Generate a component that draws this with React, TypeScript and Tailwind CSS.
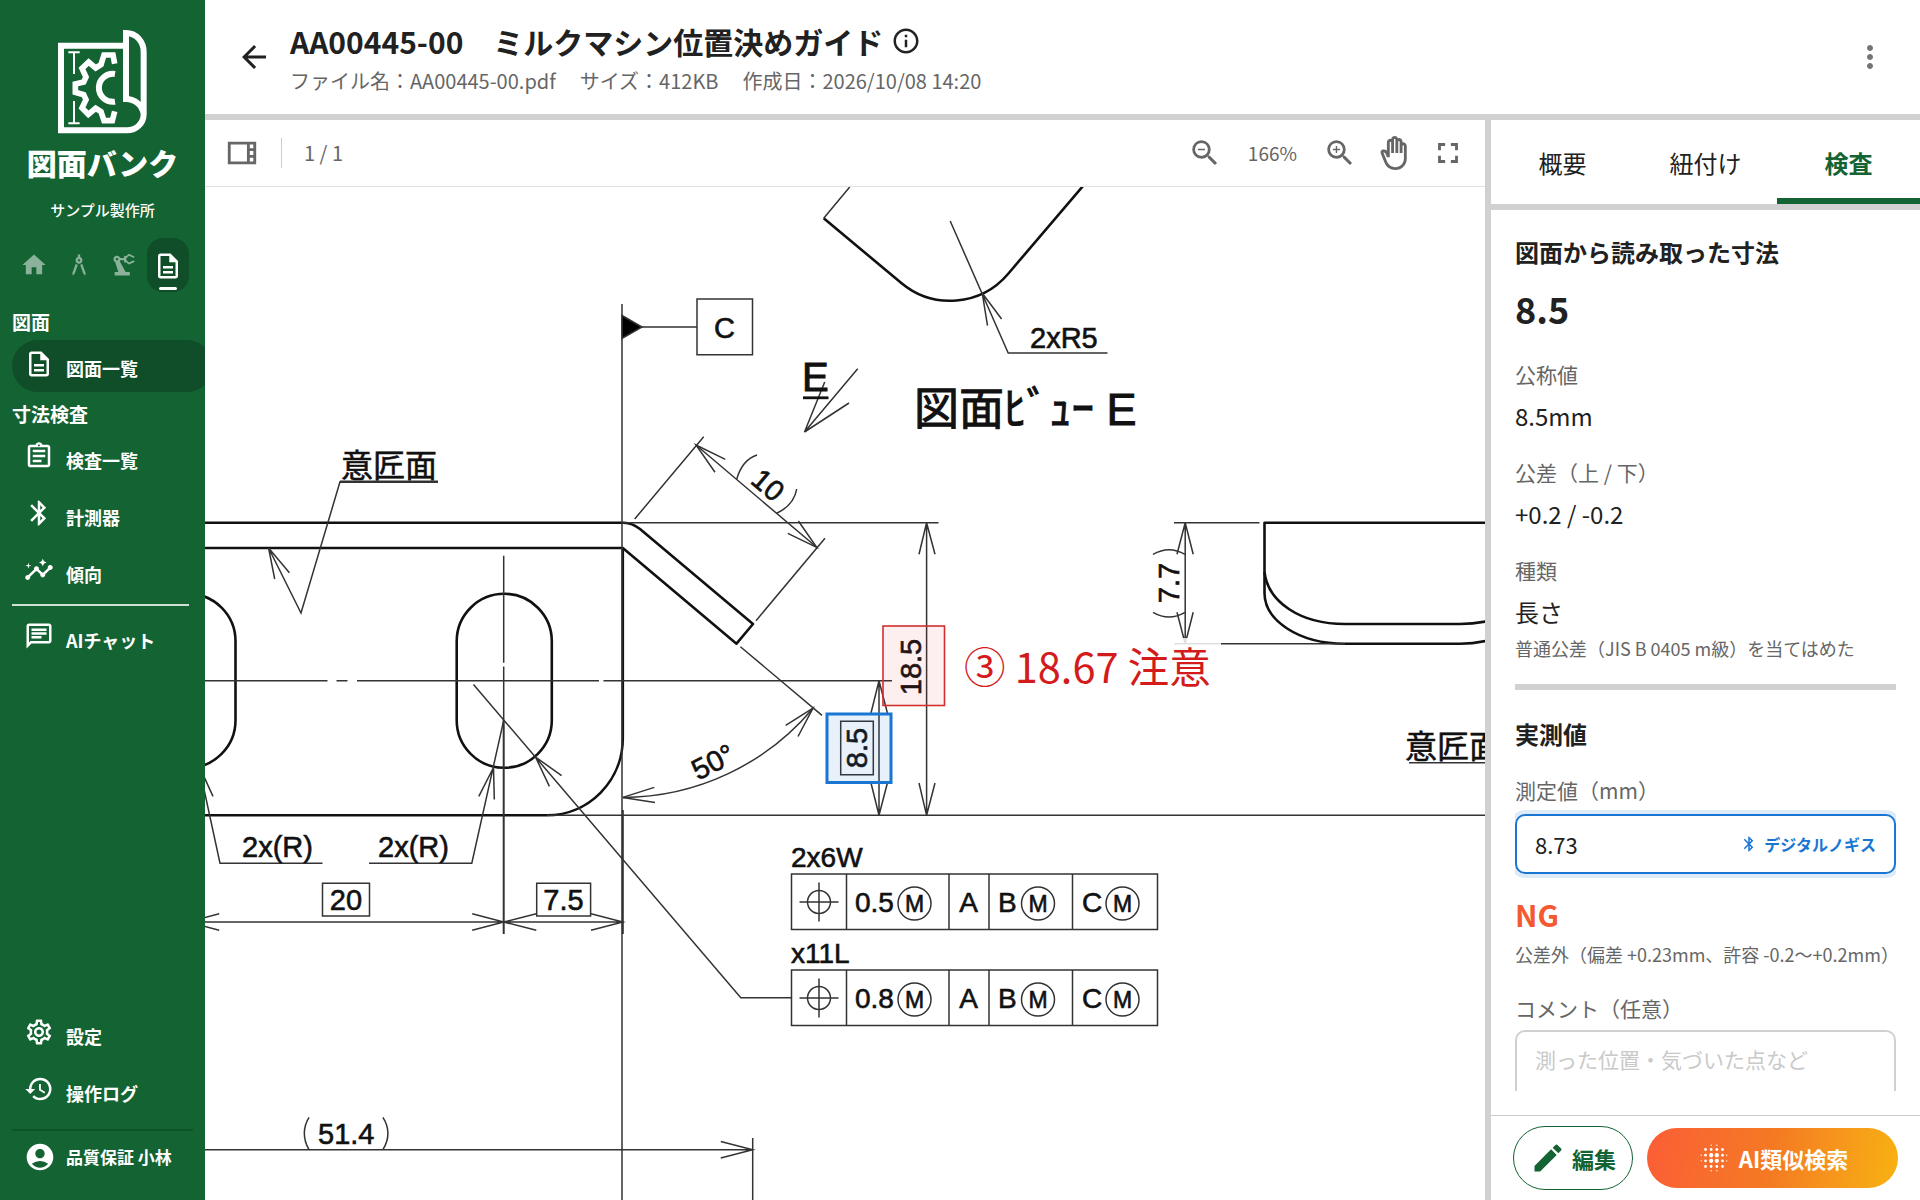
import { useState } from 'react';
import type { IconType } from 'react-icons';
import {
  MdAccountCircle,
  MdArchitecture,
  MdArrowBack,
  MdBluetooth,
  MdBlurOn,
  MdEdit,
  MdFullscreen,
  MdHistory,
  MdHome,
  MdInsights,
  MdMoreVert,
  MdOutlineAssignment,
  MdOutlineBackHand,
  MdOutlineChat,
  MdOutlineDescription,
  MdOutlineInfo,
  MdOutlineSettings,
  MdOutlineViewSidebar,
  MdPrecisionManufacturing,
  MdZoomIn,
  MdZoomOut,
} from 'react-icons/md';

interface NavItemProps {
  icon: IconType;
  label: string;
  active?: boolean;
}

function NavItem({ icon: Icon, label, active }: NavItemProps) {
  return (
    <a
      href="#"
      className={`-mr-2 flex h-[52px] items-center gap-3 rounded-full pl-3 text-lg font-bold ${
        active ? 'bg-[#0f4e28]' : ''
      }`}
    >
      <Icon size={30} className="mb-1 shrink-0" />
      <span className="pt-1 whitespace-nowrap">{label}</span>
    </a>
  );
}

function Logo() {
  return (
    <svg viewBox="168 84 276 324" className="h-[108px] w-[92px]" fill="none" stroke="#fff">
      <g strokeWidth="18">
        <path d="M375 137H180V391H378C406 391 428 370 428 342V156C428 124 405 99 375 99V297C402 297 424 316 428 342" />
        <path d="M342 222A42 42 0 1 0 342 305" />
      </g>
      <path
        strokeWidth="17"
        d="M341 191L336 165H309L300 194L284 204L263 186L243 205L255 231L248 246L223 252V277L248 284L255 299L243 324L262 343L284 325L300 335L309 362H334L341 334"
      />
      <path strokeWidth="6" d="M202 157H236M219 157V222M202 370H236M219 303V370" />
    </svg>
  );
}

function Sidebar() {
  return (
    <aside className="flex w-[205px] shrink-0 flex-col overflow-hidden bg-[#146333] pl-3 text-white">
      <div className="flex flex-col items-center pt-7 pr-3">
        <Logo />
        <div className="mt-1.5 text-[30px] leading-10 font-black">図面バンク</div>
        <div className="mt-4 text-[15px] leading-6 font-medium">サンプル製作所</div>
      </div>

      <div className="mt-4 flex items-center gap-[17px] pl-2">
        <button aria-label="ホーム" className="text-white/50"><MdHome size={28} /></button>
        <button aria-label="設計" className="text-white/50"><MdArchitecture size={28} /></button>
        <button aria-label="製造" className="text-white/50"><MdPrecisionManufacturing size={28} /></button>
        <button
          aria-label="図面"
          className="-ml-2 flex h-[54px] w-[42px] flex-col items-center justify-end rounded-2xl bg-[#0f4e28] pb-0.5"
        >
          <MdOutlineDescription size={30} />
          <span className="mt-1.5 h-[3px] w-[18px] rounded-full bg-white" />
        </button>
      </div>

      <nav className="flex flex-1 flex-col">
        <h2 className="mt-4 mb-1 text-[19px] leading-7 font-bold">図面</h2>
        <NavItem icon={MdOutlineDescription} label="図面一覧" active />
        <h2 className="mt-2 mb-1 text-[19px] leading-7 font-bold">寸法検査</h2>
        <div className="flex flex-col gap-[5px]">
          <NavItem icon={MdOutlineAssignment} label="検査一覧" />
          <NavItem icon={MdBluetooth} label="計測器" />
          <NavItem icon={MdInsights} label="傾向" />
        </div>
        <hr className="mt-1.5 mr-4 mb-1.5 border-t-2 border-white/80" />
        <NavItem icon={MdOutlineChat} label="AIチャット" />

        <div className="mt-auto flex flex-col gap-[5px]">
          <NavItem icon={MdOutlineSettings} label="設定" />
          <NavItem icon={MdHistory} label="操作ログ" />
        </div>
        <hr className="mt-3 mr-3 border-t-2 border-[#0f5429]" />
        <a href="#" className="mb-[17px] flex h-[52px] items-center gap-2.5 pl-3 text-[17px] font-bold">
          <MdAccountCircle size={32} className="shrink-0" />
          <span className="whitespace-nowrap">品質保証 小林</span>
        </a>
      </nav>
    </aside>
  );
}

function Header() {
  return (
    <header className="flex h-30 shrink-0 items-center border-b-6 border-[#d1d1d1] pr-8 pl-[31px]">
      <button aria-label="戻る" className="text-[#212121]"><MdArrowBack size={36} /></button>
      <div className="ml-[18px] pt-0.5">
        <h1 className="flex items-center gap-2 text-[30px] leading-10 font-bold text-[#212121]">
          <span className="whitespace-pre">AA00445-00　ミルクマシン位置決めガイド</span>
          <MdOutlineInfo size={30} />
        </h1>
        <div className="mt-1.5 flex gap-6 text-xl leading-7 text-[#666]">
          <span>ファイル名：AA00445-00.pdf</span>
          <span>サイズ：412KB</span>
          <span>作成日：2026/10/08 14:20</span>
        </div>
      </div>
      <button aria-label="メニュー" className="ml-auto text-[#757575]"><MdMoreVert size={36} /></button>
    </header>
  );
}

function Toolbar() {
  return (
    <div className="flex h-[67px] shrink-0 items-center border-b border-[#e2e2e2] px-5 text-[#666]">
      <button aria-label="サムネイル"><MdOutlineViewSidebar size={34} /></button>
      <span className="mx-[22px] h-[30px] w-px bg-[#ccc]" />
      <span className="text-xl">1 / 1</span>
      <div className="ml-auto flex items-center gap-5">
        <button aria-label="縮小"><MdZoomOut size={34} /></button>
        <span className="px-1.5 text-[19px]">166%</span>
        <button aria-label="拡大"><MdZoomIn size={34} /></button>
        <button aria-label="手のひら"><MdOutlineBackHand size={34} /></button>
        <button aria-label="全画面"><MdFullscreen size={34} /></button>
      </div>
    </div>
  );
}

// Material condition symbol: a circled M
function Mmc({ x, y }: { x: number; y: number }) {
  return (
    <>
      <circle cx={x} cy={y} r="16.5" />
      <text x={x} y={y + 8} fontSize="23" textAnchor="middle" fill="#111" stroke="#111" strokeWidth="0.6">M</text>
    </>
  );
}

// Feature control frame, drawn from its top edge
function ControlFrame({ y, title, value }: { y: number; title: string; value: string }) {
  return (
    <g>
      <g fill="#111" stroke="#111" strokeWidth="0.6" fontSize="28">
        <text x="791" y={y - 7}>{title}</text>
        <text x="855" y={y + 38}>{value}</text>
        <text x="968.5" y={y + 38} textAnchor="middle">A</text>
        <text x="998" y={y + 38}>B</text>
        <text x="1082" y={y + 38}>C</text>
      </g>
      <path d={`M791.5 ${y}H1157.5V${y + 55.5}H791.5ZM846.5 ${y}v55.5M949 ${y}v55.5M989 ${y}v55.5M1072.5 ${y}v55.5`} />
      <circle cx="819" cy={y + 28} r="11.5" />
      <path d={`M799.5 ${y + 28}h39M819 ${y + 8.5}v39`} />
      <Mmc x={914.5} y={y + 29.5} />
      <Mmc x={1038} y={y + 29.5} />
      <Mmc x={1122.5} y={y + 29.5} />
    </g>
  );
}

function Drawing() {
  return (
    <svg
      viewBox="205 187 1280 1013"
      preserveAspectRatio="xMinYMin slice"
      className="block h-full w-full font-['Liberation_Sans','Noto_Sans_CJK_JP',sans-serif]"
      fill="none"
      stroke="#333"
      strokeWidth="1.5"
    >
      {/* part outline */}
      <g stroke="#111" strokeWidth="2.6" strokeLinejoin="round">
        <path d="M200 522.7H624Q632 522.7 640 529L753 624L736.5 643.7L622.8 548H200" />
        <path d="M622.8 548V738A76 77 0 0 1 547 815.3H200" />
        <path d="M456.7 641.3A47.55 47.55 0 0 1 551.8 641.3V720.3A47.55 47.55 0 0 1 456.7 720.3Z" />
        <path d="M140.4 641.3A47.55 47.55 0 0 1 235.5 641.3V720.3A47.55 47.55 0 0 1 140.4 720.3Z" />
        <path d="M823.7 218.3L901.3 283A76 76 0 0 0 1008 274L1083 186" />
        <path d="M1500 522.7H1264.5V593C1264.5 620 1298 643.7 1345 643.7H1460Q1475 643.7 1490 640" />
        <path d="M1264.5 572C1268 602 1300 624 1345 624H1460Q1475 624 1490 620.5" />
      </g>

      {/* datum C and centre lines */}
      <path d="M622 304V1200M642 327H697M697 299H752.5V354.7H697Z" />
      <path d="M622 315.5L642 327L622 338.5Z" fill="#000" />
      <path d="M503.7 555.7V662.7M503.7 666.5V720M205 680.7H327.5M336.5 680.7H347.5M357 680.7H599M603.5 680.7H892" />
      <path d="M503.7 720V934M622.8 810V934" strokeWidth="2" />
      <path d="M622 522.7H938.5M547 815.3H1490" strokeWidth="1.6" />

      {/* leaders */}
      <path d="M438 481.8H340L301 613L268.6 548L274.7 579M268.6 548L289.4 572.7" />
      <path d="M340 481.8H438" strokeWidth="2.4" />
      <path d="M849.7 187L823.7 218.3M950.2 221L1008.2 353H1107.5M987.5 325.7L982.3 293.3L1001.6 319" />
      <path d="M857.7 368.7L804.5 432L824.7 382M804.5 432L849 403" />
      <path d="M803 397.8H828.5" stroke="#111" strokeWidth="2.8" />
      <path d="M473.5 684.5L740.8 997.8H791M561.6 775.7L535.5 757L549.4 786.4" />
      <path d="M503.7 720.3L471.8 863.2H369M478.8 796.4L493.5 767.5L494.3 799.5" />
      <path d="M202 780L220 863.2H322.5M200 768L213 796.4" />

      {/* (10) and 50 degrees */}
      <path d="M634.7 519L703.7 436.7M756 620.7L825 538.3M696 445L816.7 547.3" />
      <path d="M725.3 459.3L696 445L715 472.3M787.8 533.3L816.7 547.3L798.4 521" />
      <path d="M757 455Q742 460 736.7 479.3M796.7 489Q794 505 776.7 513.3" />
      <path d="M740.4 646.7L822 715.4M622.8 797.4A249 249 0 0 0 813 708.2" />
      <path d="M654.3 787.4L622.8 797.4L655 802.6M785.7 725.4L813 708.2L798 736.5" />

      {/* vertical dimensions */}
      <path d="M926.6 522.7V815.3M919 554.3L926.6 522.7L935 554.3M919 783L926.6 815.3L935 783" />
      <path d="M879 680.7V815.3M871 713L879 680.7L887.4 713M871 783L879 815.3L887.4 783" />
      <path d="M1185.2 522.7V643.7M1177 554.3L1185.2 522.7L1193.2 554.3M1177 612.3L1185.2 643.7L1193.2 612.3" />
      <path d="M1174 522.7H1259.5M1174 643.7H1345M1153 554.3Q1169 545 1185 554.3M1153 612.3Q1169 621.6 1185 612.3" />

      {/* horizontal dimensions */}
      <path d="M205 922H622.8M472.2 913.8L503.7 922L472.2 930.3M536.3 913.8L503.7 922L536.3 930.3M591 913.8L622.8 922L591 930.3M219.2 913.8L188 922L219.2 930.3" />
      <path d="M322.5 883.2H369.5V915.9H322.5ZM536.7 883.2H590.6V915.9H536.7Z" fill="#fff" />
      <path d="M205 1149.7H752.7M720.8 1141.5L752.7 1149.7L720.8 1158M752.7 1138V1200" />
      <path d="M309 1117.3Q299.6 1133 309 1149.7M382.9 1117.3Q393 1133 382.9 1149.7" />

      <g fill="#111" stroke="#111" strokeWidth="0.6" fontSize="29">
        <text x="724.5" y="338" textAnchor="middle">C</text>
        <text x="1030" y="348">2xR5</text>
        <text x="802" y="391" fontSize="40" strokeWidth="1">E</text>
        <text x="914" y="425" fontSize="45" strokeWidth="1">図面ﾋﾞｭｰ E</text>
        <text x="341" y="477" fontSize="32">意匠面</text>
        <text x="1405" y="758" fontSize="32">意匠面</text>
        <text x="242" y="857">2x(R)</text>
        <text x="378" y="857">2x(R)</text>
        <text x="346" y="910" textAnchor="middle">20</text>
        <text x="563.5" y="910" textAnchor="middle">7.5</text>
        <text x="318" y="1144">51.4</text>
        <text transform="translate(768 485) rotate(40.3)" y="10" textAnchor="middle">10</text>
        <text transform="translate(713 762) rotate(-27)" y="10" textAnchor="middle">50°</text>
        <text transform="translate(911 667) rotate(-90)" y="10" textAnchor="middle">18.5</text>
        <text transform="translate(857 748) rotate(-90)" y="10" textAnchor="middle">8.5</text>
        <text transform="translate(1169 583) rotate(-90)" y="10" textAnchor="middle">7.7</text>
      </g>
      <path d="M1409 762.7H1490M840.7 721.3H873.3V774.7H840.7Z" />

      <ControlFrame y={874} title="2x6W" value="0.5" />
      <ControlFrame y={970} title="x11L" value="0.8" />

      {/* inspection marks */}
      <rect x="955" y="638" width="266" height="60" fill="#fff" fillOpacity="0.85" stroke="none" />
      <rect x="883" y="626" width="61.5" height="79.5" fill="#e53935" fillOpacity="0.08" stroke="#d32f2f" strokeWidth="1.6" />
      <rect x="827" y="714" width="64" height="68.5" fill="#1976d2" fillOpacity="0.1" stroke="#1976d2" strokeWidth="3" />
      <text
        x="964"
        y="682.5"
        fontSize="41.5"
        fill="#d31b1b"
        stroke="none"
        className="font-['Noto_Sans_CJK_JP',sans-serif]"
      >
        ③ 18.67 注意
      </text>
    </svg>
  );
}

const tabs = ['概要', '紐付け', '検査'];

const facts = [
  { label: '公称値', value: '8.5mm' },
  { label: '公差（上 / 下）', value: '+0.2 / -0.2' },
  { label: '種類', value: '長さ' },
];

function InspectionPanel() {
  const [tab, setTab] = useState('検査');
  const [measured, setMeasured] = useState('8.73');

  return (
    <section className="flex w-[435px] shrink-0 flex-col border-l-6 border-[#d1d1d1]">
      <div className="flex h-[90px] shrink-0 border-b-6 border-[#d1d1d1]">
        {tabs.map((name) => (
          <button
            key={name}
            onClick={() => setTab(name)}
            className={`flex-1 border-b-6 pt-2 text-2xl ${
              tab === name
                ? 'border-[#146333] font-bold text-[#146333]'
                : 'border-transparent text-[#212121]'
            }`}
          >
            {name}
          </button>
        ))}
      </div>

      <div className="mx-6 mb-6 min-h-0 flex-1 overflow-y-auto pt-6 text-[#212121] [scrollbar-width:none]">
        <h2 className="text-2xl leading-9 font-bold">図面から読み取った寸法</h2>
        <p className="mt-3.5 text-4xl leading-12 font-bold">8.5</p>
        <dl className="mt-[26px] flex flex-col gap-[22px]">
          {facts.map((fact) => (
            <div key={fact.label}>
              <dt className="text-[21px] leading-8 text-[#666]">{fact.label}</dt>
              <dd className="mt-2 text-2xl leading-9">{fact.value}</dd>
            </div>
          ))}
        </dl>
        <p className="mt-1 text-lg leading-7 whitespace-nowrap text-[#666]">
          普通公差（JIS B 0405 m級）を当てはめた
        </p>
        <hr className="mt-[22px] mb-6 border-t-6 border-[#d1d1d1]" />

        <h2 className="text-2xl leading-10 font-bold">実測値</h2>
        <label htmlFor="measured" className="mt-5 block text-[21px] leading-8 text-[#666]">
          測定値（mm）
        </label>
        <div className="mt-2 flex h-15 items-center rounded-[10px] border-2 border-[#1976d2] px-[18px] ring-4 ring-[#1976d2]/15">
          <input
            id="measured"
            value={measured}
            onChange={(e) => setMeasured(e.target.value)}
            className="min-w-0 flex-1 text-[22px] outline-none"
          />
          <span className="flex items-center gap-1.5 text-base font-bold text-[#1976d2]">
            <MdBluetooth size={18} />
            デジタルノギス
          </span>
        </div>
        <p className="mt-[22px] text-3xl leading-9 font-bold text-[#f4592f]">NG</p>
        <p className="mt-2 text-lg leading-7 whitespace-nowrap text-[#666]">
          公差外（偏差 +0.23mm、許容 -0.2〜+0.2mm）
        </p>
        <label htmlFor="comment" className="mt-6 block text-[21px] leading-8 text-[#666]">
          コメント（任意）
        </label>
        <textarea
          id="comment"
          placeholder="測った位置・気づいた点など"
          className="mt-1.5 block h-32 w-full resize-none rounded-[10px] border-2 border-[#d0d0d0] px-[18px] py-[11px] text-[21px] leading-8 placeholder:text-[#c9c9c9]"
        />
      </div>

      <div className="flex h-[85px] shrink-0 items-center gap-3.5 border-t border-[#ccc] px-[22px] font-bold">
        <button className="flex h-16 w-30 items-center justify-center gap-1.5 rounded-full border border-[#146333] text-[22px] text-[#146333]">
          <MdEdit size={36} />
          編集
        </button>
        <button className="flex h-15 flex-1 items-center justify-center gap-2 rounded-full bg-linear-100 from-[#fb5d35] via-[#f47a22] to-[#f7b20f] text-[22px] text-white">
          <MdBlurOn size={34} />
          AI類似検索
        </button>
      </div>
    </section>
  );
}

export default function App() {
  return (
    <div className="flex h-screen overflow-hidden bg-white font-['Noto_Sans_CJK_JP',sans-serif]">
      <Sidebar />
      <main className="flex min-w-0 flex-1 flex-col">
        <Header />
        <div className="flex min-h-0 flex-1">
          <div className="flex min-w-0 flex-1 flex-col">
            <Toolbar />
            <div className="min-h-0 flex-1 overflow-hidden">
              <Drawing />
            </div>
          </div>
          <InspectionPanel />
        </div>
      </main>
    </div>
  );
}
